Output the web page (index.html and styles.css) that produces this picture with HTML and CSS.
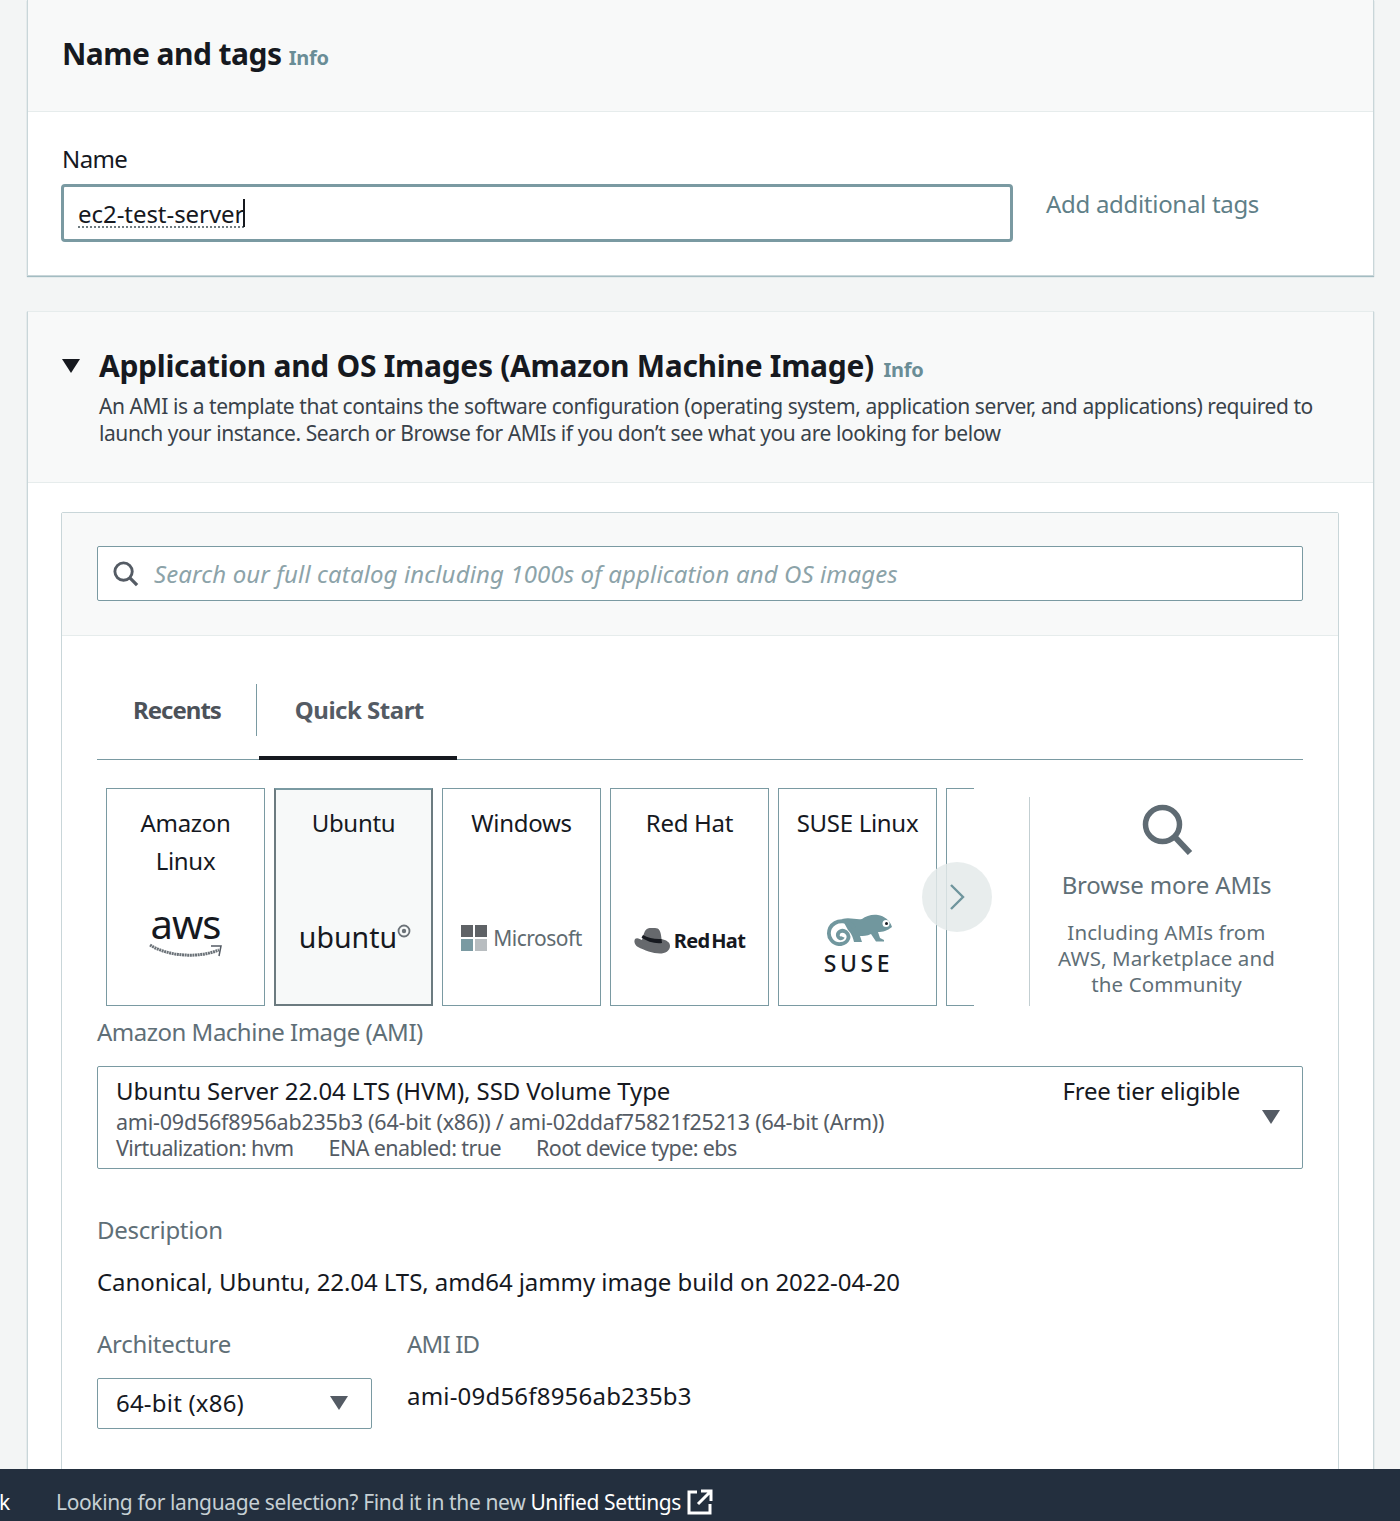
FILE: index.html
```html
<!DOCTYPE html>
<html lang="en">
<head>
<meta charset="utf-8">
<title>Launch an instance</title>
<link rel="stylesheet" href="styles.css">
</head>
<body>
<main class="page">
  <section class="card name-card">
    <header class="card-head name-head">
      <h2 class="h2">Name and tags <a class="info">Info</a></h2>
    </header>
    <div class="name-body">
      <label class="label-dark">Name</label>
      <div class="name-row">
        <div class="name-input"><span class="name-value">ec2-test-server</span><span class="caret"></span></div>
        <a class="add-tags">Add additional tags</a>
      </div>
    </div>
  </section>

  <section class="card ami-card">
    <header class="card-head ami-head">
      <svg class="disclosure" viewBox="0 0 18 14"><path d="M0 0H18L9 14Z" fill="#16191f"/></svg>
      <div>
        <h2 class="h2 h2-wide">Application and OS Images (Amazon Machine Image) <a class="info">Info</a></h2>
        <p class="desc">An AMI is a template that contains the software configuration (operating system, application server, and applications) required to launch your instance. Search or Browse for AMIs if you don’t see what you are looking for below</p>
      </div>
    </header>
    <div class="ami-body">
      <div class="inner">
        <div class="search-band">
          <div class="search">
            <svg class="search-icon" viewBox="0 0 28 28"><circle cx="12" cy="12" r="9" fill="none" stroke="#545b64" stroke-width="3"/><path d="M18.5 18.5L26 26" stroke="#545b64" stroke-width="3.4"/></svg>
            <span class="placeholder">Search our full catalog including 1000s of application and OS images</span>
          </div>
        </div>
        <div class="inner-body">
          <div class="tabs">
            <span class="tab tab-recents">Recents</span>
            <span class="tab-sep"></span>
            <span class="tab tab-active">Quick Start</span>
          </div>
          <div class="gallery">
            <div class="tiles">
              <div class="tile">
                <div class="tile-name">Amazon Linux</div>
                <div class="logo logo-aws"><span class="aws-word">aws</span>
                  <svg class="aws-smile" viewBox="0 0 74 18"><path d="M1 3C20 15 50 16 70 8" fill="none" stroke="#6b7278" stroke-width="3" stroke-dasharray="2 .6"/><path d="M62 4L72 4L70 14" fill="none" stroke="#545b64" stroke-width="1.5"/></svg>
                </div>
              </div>
              <div class="tile tile-selected">
                <div class="tile-name">Ubuntu</div>
                <div class="logo logo-ubuntu"><span class="ubuntu-word">ubuntu</span><svg class="ubuntu-mark" viewBox="0 0 14 14"><circle cx="7" cy="7" r="5.500" fill="none" stroke="#6b7278" stroke-width="1.800"/><circle cx="7" cy="7" r="2.200" fill="#6b7278"/></svg></div>
              </div>
              <div class="tile">
                <div class="tile-name">Windows</div>
                <div class="logo logo-ms">
                  <span class="ms-grid"><i class="ms-a"></i><i class="ms-a"></i><i class="ms-b"></i><i class="ms-c"></i></span>
                  <span class="ms-word">Microsoft</span>
                </div>
              </div>
              <div class="tile">
                <div class="tile-name">Red Hat</div>
                <div class="logo logo-rh">
                  <svg class="rh-hat" viewBox="0 0 36 27"><path d="M11 4C13 0 18 1 21 1C25 1 27 4 27.500 12C32 13 36 15 36 19C36 24 31 26.500 26 26.500C19 26.500 10 23 4 20C1 18 -.5 15 1 12C3 10 6 12 8 13C9 10 9.500 7 11 4Z" fill="#66696d"/><path d="M7.500 10.500C13 14.500 21 17 28 16L27.500 12C21 12.500 14 11 9 8Z" fill="#16191f"/></svg>
                  <span class="rh-word">Red Hat</span>
                </div>
              </div>
              <div class="tile">
                <div class="tile-name">SUSE Linux</div>
                <div class="logo logo-suse">
                  <svg class="suse-mark" viewBox="0 0 66 32"><path d="M16 5C24 3 30 6 36 5C40 2 46 0 52 1C58 2 64 6 66 13C61 17 57 18 52 18L54 24L58 26V27.500H50L45 20C41 22 37 22 34 22L36 28H28C27 24 26 20 22 16Z" fill="#71979e"/><path d="M28 14C24 6 10 4 4 14C0 24 8 31 15 30C22 29 25 22 20 18C16 15 11 18 12 22C13 25 16 25 17 23" fill="none" stroke="#71979e" stroke-width="3.800"/><circle cx="60" cy="9.500" r="3.500" fill="#fff"/><circle cx="60.500" cy="9.500" r="1.500" fill="#16191f"/></svg>
                  <span class="suse-word">SUSE</span>
                </div>
              </div>
              <div class="tile tile-clipped"></div>
            </div>
            <button class="next" type="button" aria-label="Next"><svg viewBox="0 0 16 28"><path d="M2 2L14 14L2 26" fill="none" stroke="#6f959d" stroke-width="2.400"/></svg></button>
            <div class="browse">
              <svg class="browse-icon" viewBox="0 0 52 52"><circle cx="21.500" cy="21.500" r="17" fill="none" stroke="#5f6b73" stroke-width="5.500"/><path d="M33 33L49 50" stroke="#5f6b73" stroke-width="6"/></svg>
              <div class="browse-title">Browse more AMIs</div>
              <div class="browse-text">Including AMIs from<br>AWS, Marketplace and<br>the Community</div>
            </div>
          </div>

          <div class="field-label ami-label">Amazon Machine Image (AMI)</div>
          <div class="ami-select">
            <div class="ami-select-top"><span>Ubuntu Server 22.04 LTS (HVM), SSD Volume Type</span><span class="free-tier">Free tier eligible</span></div>
            <div class="ami-sub">ami-09d56f8956ab235b3 (64-bit (x86)) / ami-02ddaf75821f25213 (64-bit (Arm))</div>
            <div class="ami-sub ami-meta"><span>Virtualization: hvm</span><span>ENA enabled: true</span><span>Root device type: ebs</span></div>
            <svg class="caret-down ami-caret" viewBox="0 0 18 14"><path d="M0 0H18L9 14Z" fill="#545b64"/></svg>
          </div>

          <div class="field-label desc-label">Description</div>
          <div class="desc-value">Canonical, Ubuntu, 22.04 LTS, amd64 jammy image build on 2022-04-20</div>

          <div class="details">
            <div class="arch">
              <div class="field-label">Architecture</div>
              <div class="arch-select"><span class="arch-value">64-bit (x86)</span><svg class="caret-down" viewBox="0 0 18 14"><path d="M0 0H18L9 14Z" fill="#545b64"/></svg></div>
            </div>
            <div class="ami-id">
              <div class="field-label ami-id-label">AMI ID</div>
              <div class="ami-id-value">ami-09d56f8956ab235b3</div>
            </div>
          </div>
        </div>
      </div>
    </div>
  </section>
</main>
<footer class="footer">
  <span class="footer-clip">k</span>
  <span class="footer-text">Looking for language selection? Find it in the new <a class="footer-link">Unified Settings</a></span>
  <svg class="footer-ext" viewBox="0 0 26 26"><path d="M10 3H2V24H23V15" fill="none" stroke="#fff" stroke-width="3"/><path d="M14 2H24V12M24 2L11 15" fill="none" stroke="#fff" stroke-width="3"/></svg>
</footer>
</body>
</html>
```

FILE: styles.css
```css
* { box-sizing: border-box; }
html, body { margin: 0; height: 1521px; }
body {
  position: relative;
  overflow: hidden;
  background: #f3f5f5;
  color: #16191f;
  font-family: "Noto Sans", "Liberation Sans", sans-serif;
  font-size: 24px;
  letter-spacing: -0.3px;
}
.page { padding: 0 26px 0 27px; }
.card {
  background: #fff;
  border: 1px solid #c9d6d9;
  border-top: 0;
  box-shadow: 0 1px 1px rgba(110, 150, 160, .6);
}
.card-head { background: #f8f9f9; border-bottom: 1px solid #e6ecec; }
.h2 { margin: 0; font-size: 30px; line-height: 38px; font-weight: 700; letter-spacing: -0.55px; }
.h2-wide { letter-spacing: -0.3px; }
.info { font-size: 20px; font-weight: 700; color: #6a8d96; letter-spacing: -0.2px; }
.h2-wide .info { margin-left: 2px; }

.name-head { height: 112px; padding: 35px 0 0 34px; }
.name-body { height: 163px; padding: 31px 0 0 33px; }
.label-dark { display: block; padding-left: 1px; line-height: 32px; letter-spacing: -.6px; }
.name-row { display: flex; align-items: center; margin-top: 9px; }
.name-input {
  display: flex;
  align-items: center;
  width: 952px;
  height: 58px;
  padding: 0 14px;
  border: 3px solid #7a9aa2;
  border-radius: 4px;
}
.name-value { letter-spacing: -.05px; text-decoration: underline dotted #6f7b80 2px; text-underline-offset: 4px; }
.caret { width: 2px; height: 28px; background: #16191f; margin-left: -1px; }
.add-tags { margin-left: 33px; color: #5f7f88; position: relative; top: -10px; }

.ami-card { margin-top: 35px; border-top: 1px solid #e6ecec; height: 1210px; }
.ami-head { display: flex; height: 171px; padding: 35px 20px 0 34px; }
.disclosure { width: 18px; height: 14px; margin: 12px 19px 0 0; flex: none; }
.desc { margin: 4px 0 0; font-size: 21px; line-height: 27px; color: #39424a; letter-spacing: -0.42px; }

.ami-body { padding: 29px 34px 0 33px; }
.inner { border: 1px solid #c9d6d9; border-radius: 2px; height: 1009px; }
.search-band { background: #f8f9f9; border-bottom: 1px solid #e6ecec; height: 123px; padding: 33px 35px 0; }
.search {
  display: flex;
  align-items: center;
  height: 55px;
  padding-left: 14px;
  background: #fff;
  border: 1px solid #7a9aa2;
  border-radius: 2px;
}
.search-icon { width: 27px; height: 27px; margin-right: 15px; flex: none; }
.placeholder { font-style: italic; color: #8ca3a9; letter-spacing: .12px; }

.inner-body { padding: 0 35px; }
.tabs { display: flex; align-items: center; height: 124px; padding-top: 24px; border-bottom: 1px solid #7a9aa2; position: relative; }
.tab { font-weight: 700; font-size: 24px; color: #545b64; letter-spacing: -.5px; }
.tab-recents { margin-left: 36px; color: #4c5259; letter-spacing: -1px; }
.tab-sep { width: 1px; height: 52px; background: #7a9aa2; margin: 0 38px 0 35px; }
.tab-active { position: relative; }
.tab-active::after {
  content: "";
  position: absolute;
  left: -36px;
  width: 198px;
  bottom: -34px;
  height: 4px;
  background: #16191f;
}

.gallery { display: flex; position: relative; margin-top: 28px; height: 218px; }
.tiles { display: flex; gap: 9px; width: 868px; margin-left: 9px; overflow: hidden; flex: none; }
.tile {
  flex: none;
  width: 159px;
  height: 218px;
  padding: 15px 10px 0;
  border: 1px solid #7a9aa2;
  text-align: center;
  position: relative;
}
.tile-selected { background: #f7f9f9; border: 2px solid #6c7b80; border-top-color: #7a9aa2; padding-top: 14px; }
.tile-name { line-height: 38px; }
.logo { position: absolute; left: 0; right: 0; display: flex; align-items: center; justify-content: center; }
.logo-aws { top: 114px; flex-direction: column; }
.aws-word { font-size: 40px; line-height: 42px; letter-spacing: -1px; }
.aws-smile { width: 74px; height: 18px; margin-top: -3px; }
.logo-ubuntu { top: 126px; padding-left: 3px; align-items: flex-start; }
.ubuntu-word { font-size: 28.5px; line-height: 42px; letter-spacing: 0; }
.ubuntu-mark { width: 14px; height: 14px; margin: 8px 0 0 0; }
.logo-ms { top: 134px; gap: 6px; }
.ms-grid { display: grid; grid-template-columns: 12px 12px; gap: 2px; }
.ms-grid i { display: block; height: 12px; }
.ms-a { background: #5f6266; }
.ms-b { background: #7a9aa2; }
.ms-c { background: #b8bdc0; }
.ms-word { font-size: 21px; color: #5f6b70; line-height: 30px; letter-spacing: -.5px; }
.logo-rh { top: 138px; gap: 4px; }
.rh-hat { width: 36px; height: 27px; }
.rh-word { font-size: 20px; font-weight: 700; color: #16191f; word-spacing: -3px; letter-spacing: -.6px; }
.logo-suse { top: 125px; padding-left: 2px; flex-direction: column; }
.suse-mark { width: 66px; height: 32px; }
.suse-word { font-size: 23px; line-height: 28px; letter-spacing: 3.6px; font-weight: 500; margin-top: 3px; }
.next {
  position: absolute;
  left: 825px;
  top: 74px;
  width: 70px;
  height: 70px;
  padding: 0;
  border: 0;
  border-radius: 50%;
  background: rgba(228, 234, 234, .85);
  display: flex;
  align-items: center;
  justify-content: center;
}
.next svg { width: 16px; height: 28px; }
.browse {
  flex: 1;
  margin: 9px 0 0 55px;
  border-left: 1px solid #c3cfd2;
  text-align: center;
  color: #5f6f77;
}
.browse-icon { display: block; width: 52px; height: 52px; margin: 6px auto 0; }
.browse-title { line-height: 32px; margin-top: 14px; letter-spacing: -.15px; }
.browse-text { font-size: 20.5px; line-height: 26px; margin-top: 18px; letter-spacing: .1px; }

.field-label { color: #5f6f77; line-height: 32px; }
.ami-label { margin-top: 10px; letter-spacing: -.5px; }
.ami-select {
  position: relative;
  height: 103px;
  margin-top: 18px;
  padding: 6px 18px 0;
  border: 1px solid #7a9aa2;
  border-radius: 2px;
}
.ami-select-top { display: flex; justify-content: space-between; padding-right: 44px; line-height: 36px; letter-spacing: -.1px; }
.free-tier { letter-spacing: -.2px; }
.ami-sub { font-size: 21.5px; line-height: 26px; color: #545b64; letter-spacing: -.22px; }
.ami-meta { display: flex; gap: 35px; line-height: 25px; letter-spacing: -.6px; }
.caret-down { width: 18px; height: 14px; flex: none; }
.ami-caret { position: absolute; right: 22px; top: 43px; }
.desc-label { margin-top: 45px; }
.desc-value { margin-top: 20px; line-height: 32px; letter-spacing: -.07px; }
.details { display: flex; margin-top: 30px; }
.arch { width: 310px; }
.arch-select {
  display: flex;
  align-items: center;
  justify-content: space-between;
  width: 275px;
  height: 51px;
  margin-top: 18px;
  padding: 0 23px 2px 18px;
  border: 1px solid #7a9aa2;
  border-radius: 2px;
}
.arch-value { letter-spacing: .2px; }
.ami-id-label { letter-spacing: -.8px; }
.ami-id-value { margin-top: 20px; line-height: 32px; letter-spacing: .2px; }

.footer {
  position: absolute;
  left: 0;
  right: 0;
  bottom: 0;
  height: 52px;
  padding-top: 14px;
  background: #232f3e;
  display: flex;
  align-items: center;
  color: #c6d0d4;
  font-size: 21px;
  letter-spacing: -.37px;
}
.footer-clip { color: #fff; width: 56px; text-indent: -1px; }
.footer-text { white-space: nowrap; }
.footer-link { color: #fff; }
.footer-ext { width: 26px; height: 26px; margin: 0 0 0 6px; }
```
